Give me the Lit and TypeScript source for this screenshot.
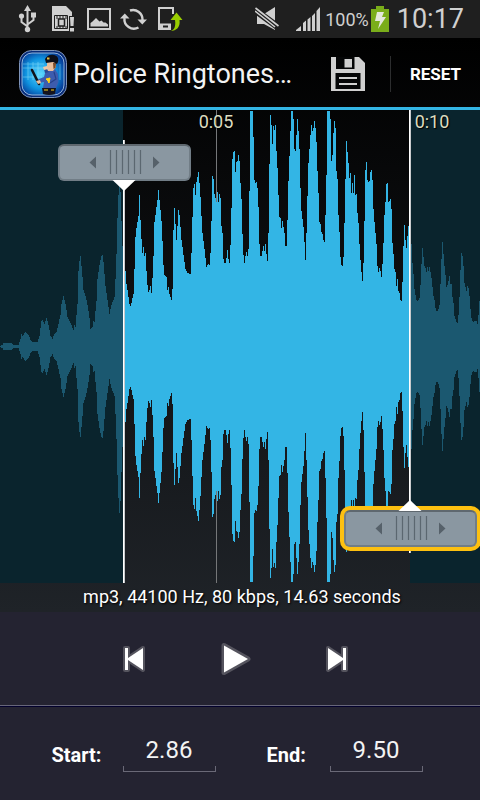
import { LitElement, html, css, svg } from "lit";
import { customElement, state } from "lit/decorators.js";

// Amplitude key points [column, half height] for the first half of the track.
const ATTACK: number[][] = [
  [0, 1], [2, 2], [3, 4], [11, 4], [13, 2], [18, 2], [20, 8], [21, 13], [22, 11], [25, 15], [28, 12], [30, 7], [32, 5], [37, 5],
  [39, 11], [41, 26], [42, 27], [44, 23], [46, 29], [48, 22], [50, 11], [52, 8], [54, 13], [56, 15], [58, 23], [60, 32], [61, 43],
  [63, 51], [65, 43], [67, 30], [70, 24], [73, 17], [74, 22], [75, 20], [77, 43], [78, 76], [79, 86], [80, 91], [82, 70], [83, 57],
  [85, 51], [87, 42], [89, 29], [90, 18], [92, 20], [93, 26], [94, 25], [96, 46], [97, 68], [99, 82], [101, 91], [102, 92], [103, 85],
  [105, 61], [107, 47], [109, 33], [111, 42], [114, 50], [115, 68], [116, 93], [117, 129], [118, 152], [119, 167], [120, 155],
  [121, 126], [122, 101], [123, 90], [124, 82], [125, 76], [126, 63], [127, 57], [129, 43], [130, 41], [131, 44], [133, 53],
  [134, 78], [135, 110], [136, 119], [138, 131], [139, 152], [140, 127], [141, 108], [142, 94], [143, 100], [144, 91], [145, 94],
  [146, 76], [147, 62], [148, 55], [149, 57], [150, 61], [151, 54], [152, 69], [153, 91], [154, 125], [155, 132], [157, 147],
  [158, 157], [159, 147], [161, 126], [162, 106], [163, 82], [164, 72], [166, 70], [167, 57], [168, 60], [169, 53], [171, 47],
  [172, 58], [173, 117], [174, 139], [175, 123], [176, 107], [177, 121], [178, 137], [179, 132], [181, 107], [183, 92], [185, 78],
  [187, 74], [190, 73], [191, 94], [192, 130], [193, 159], [194, 163], [195, 152], [196, 165], [198, 175], [199, 164], [200, 150],
  [201, 131], [202, 114], [204, 98], [206, 80], [207, 82], [208, 83], [209, 82], [210, 94], [211, 126], [212, 171], [213, 168],
  [214, 153], [215, 149], [216, 145], [217, 155], [218, 145], [219, 153], [220, 149], [221, 121], [222, 114], [223, 88], [224, 84],
  [225, 84], [226, 89], [227, 97], [228, 88], [229, 84], [230, 102], [231, 139], [232, 188], [233, 195], [234, 196], [235, 175],
  [236, 185], [237, 186], [238, 192], [239, 186],
];

// One half height per column for the rest of the visible track.
const BODY: number[] = [
  164, 148, 113, 92, 84, 91, 95, 91, 98, 156, 236, 236, 236, 210, 167, 164, 165, 159, 140, 103, 91, 91, 96, 101, 96, 103, 93, 86, 114,
  183, 232, 222, 203, 221, 217, 222, 196, 179, 152, 130, 129, 119, 126, 120, 114, 101, 101, 127, 166, 191, 216, 236, 236, 228, 198,
  196, 212, 228, 216, 198, 159, 136, 128, 120, 105, 87, 114, 151, 184, 198, 212, 222, 216, 219, 226, 219, 205, 176, 154, 125, 123,
  115, 113, 107, 105, 132, 172, 236, 236, 236, 228, 186, 192, 214, 226, 219, 176, 168, 132, 115, 90, 82, 81, 90, 124, 168, 206, 195,
  184, 169, 174, 154, 164, 154, 172, 152, 153, 134, 124, 103, 87, 75, 66, 84, 126, 177, 185, 167, 165, 166, 175, 177, 167, 138, 125,
  114, 103, 81, 75, 79, 76, 70, 83, 104, 132, 145, 163, 164, 145, 146, 148, 138, 104, 93, 78, 75, 61, 68, 56, 54, 47, 46, 65, 101,
  122, 107, 99, 111, 121, 118, 112, 103, 84, 73, 58, 52, 47, 46, 47, 49, 62, 83, 99, 90, 81, 79, 75, 80, 76, 80, 75, 69, 60, 51, 47,
  39, 36, 36, 38, 42, 63, 88, 105, 93, 81, 72, 60, 62, 66, 71, 63, 63, 50, 44, 31, 28, 25, 24, 32, 50, 77, 94, 91, 81, 64, 60, 56,
  61, 59, 51, 38, 29, 26, 25, 26, 26, 26, 23, 32, 46,
];

function buildColumns(): number[] {
  const out: number[] = [];
  for (let i = 0; i < ATTACK.length - 1; i++) {
    const [x0, h0] = ATTACK[i];
    const [x1, h1] = ATTACK[i + 1];
    for (let x = x0; x < x1; x++) out.push(Math.round(h0 + ((h1 - h0) * (x - x0)) / (x1 - x0)));
  }
  out.push(186);
  return out.concat(BODY).slice(0, 480);
}

const MID = 236;
const COLUMNS = buildColumns();

function wavePath(from: number, to: number): string {
  let top = `M${from} ${MID}`;
  let bottom = "";
  for (let x = from; x < to; x++) {
    const h = COLUMNS[x] ?? 46;
    top += `V${MID - h + 1}H${x + 1}`;
    bottom = `V${MID + h}H${x}` + bottom;
  }
  return top + bottom + "Z";
}

const grip = svg`
  <path d="M38 12.500v12l-6.500-6zM95 12.500v12l6.500-6z" fill="#56616a"/>
  <path d="M52.500 6v24M58.500 6v24M64.500 6v24M70.500 6v24M76.500 6v24M82.500 6v24" stroke="#5b6770" stroke-width="1.200"/>`;

@customElement("wave-editor")
class WaveEditor extends LitElement {
  static styles = css`
    :host { display: block; position: relative; overflow: hidden; min-height: 300px; }
    .wave { position: absolute; inset: 0; width: 100%; height: 100%; display: block; }
    .time { position: absolute; top: 1px; font-size: 18px; line-height: 21px; color: #dcdcc0; transform: translateX(-50%); text-shadow: 1px 1px 1px #000; }
    .t5 { left: 45%; }
    .t10 { left: 90%; }
    .line { position: absolute; width: 1px; background: #fff; border-right: 1px solid #c8cacc; }
    .line.start { left: 25.625%; top: 30px; bottom: 0; }
    .line.end { left: 85.209%; top: 0; bottom: 30px; }
    .handle {
      position: absolute; box-sizing: border-box; width: 133px; height: 37px; padding: 0; margin: 0;
      border: 2px solid #717d86; border-top-color: #5f686f; border-radius: 6px; background: #8a97a1; cursor: ew-resize;
    }
    .handle svg { position: absolute; left: -2px; top: -2px; width: 132px; height: 48px; overflow: visible; }
    .handle.start { left: calc(25.625% - 65px); top: 34px; }
    .handle.end { left: calc(85.209% - 65px); bottom: 36px; box-shadow: 0 0 0 4px #fdc010; }
  `;
  render() {
    return html`
      <svg class="wave" viewBox="0 0 480 473" preserveAspectRatio="none" shape-rendering="crispEdges" aria-label="Waveform">
        <path d="M0 0H123V473H0zM410 0H480V473H410z" fill="#0a242d"/>
        <path d="M216 0h1v473h-1z" fill="#757779"/>
        <path d=${wavePath(0, 123)} fill="#1b5870"/>
        <path d=${wavePath(123, 410)} fill="#33b5e5"/>
        <path d=${wavePath(410, 480)} fill="#1b5870"/>
      </svg>
      <span class="time t5">0:05</span>
      <span class="time t10">0:10</span>
      <div class="line start"></div>
      <div class="line end"></div>
      <button class="handle start" aria-label="Start marker">
        <svg viewBox="0 0 132 48">${grip}<path d="M54.500 36h23l-11.500 11z" fill="#fff"/></svg>
      </button>
      <button class="handle end" aria-label="End marker">
        <svg viewBox="0 0 132 48">${grip}<path d="M54.500 1h23l-11.500-11z" fill="#fff"/></svg>
      </button>`;
  }
}

@customElement("status-bar")
class StatusBar extends LitElement {
  static styles = css`
    :host { display: flex; align-items: center; height: 38px; box-sizing: border-box; padding: 0 16px; background: #1f1f1f; color: #d0d0d0; }
    svg { display: block; flex: none; }
    .left { display: flex; gap: 8px; flex: 1; }
    .right { display: flex; align-items: center; }
    .pct { font-size: 18px; line-height: 22px; margin: 2px 2px 0 5px; }
    .clock { font-size: 27px; line-height: 34px; margin-left: 8px; font-weight: 400; }
    .signal { margin-left: 17px; }
  `;
  render() {
    return html`
      <div class="left">
        <svg width="24" height="28" viewBox="0 0 24 28" fill="none" stroke="#d0d0d0" stroke-width="2">
          <path d="M11.500 25V5M11.500 21.500L5.500 17V12M11.500 19.500L17.500 15V10"/>
          <path d="M11.500 0l3.500 6h-7z" fill="#d0d0d0" stroke="none"/>
          <circle cx="5.500" cy="11" r="2.600" fill="#d0d0d0" stroke="none"/>
          <path d="M15 7.500h5v5h-5z" fill="#d0d0d0" stroke="none"/>
          <circle cx="11.500" cy="24.500" r="2.700" fill="#d0d0d0" stroke="none"/>
        </svg>
        <svg width="28" height="28" viewBox="0 0 28 28">
          <path d="M4 1h14l6 6v19H4z" fill="#d0d0d0"/>
          <path d="M6.500 10.500h13v13h-13z" fill="none" stroke="#1f1f1f"/>
          <path d="M10.500 14h6v7h-6z" fill="none" stroke="#1f1f1f" stroke-width="1.500"/>
          <path d="M9 11v3M12 11v3M15 11v3M18 11v3M9 21v3M12 21v3M15 21v3M18 21v3" stroke="#1f1f1f"/>
          <path d="M21 11h6v16h-6z" fill="#1f1f1f"/>
          <path d="M22 12h4l-.5 9h-3zM22 23h4v3.500h-4z" fill="#d0d0d0"/>
        </svg>
        <svg width="28" height="28" viewBox="0 0 28 28">
          <path d="M4 4h22v20H4z" fill="none" stroke="#d0d0d0" stroke-width="2"/>
          <path d="M6.500 21.500V18l2-1.500 3.500-3.500 3.500 3.500 2-1 2 2h2l2.500 2v2z" fill="#d0d0d0"/>
        </svg>
        <svg width="28" height="28" viewBox="0 0 28 28" fill="none" stroke="#d0d0d0" stroke-width="2.400">
          <path d="M10 5.500A9.500 9.500 0 0 1 22.500 15M18.500 22.500A9.500 9.500 0 0 1 4.500 13"/>
          <path d="M17.500 14.500h9.500l-4.700 5zM0 13.500h9.500l-4.700-5z" fill="#d0d0d0" stroke="none"/>
        </svg>
        <svg width="28" height="28" viewBox="0 0 28 28">
          <path d="M2 2h16v7h-2V4H4v15h10v5H2z" fill="#d0d0d0"/>
          <path d="M2 18.500h13V25H2z" fill="#d0d0d0"/>
          <path d="M7 20.500h5v2H7z" fill="#1f1f1f"/>
          <path d="M14.500 26c4-1 5.500-5 4.500-11h-4.500l6-7.500 6 7.500h-3c1 7-3 11-9 11z" fill="#99cc00"/>
        </svg>
      </div>
      <div class="right">
        <svg width="24" height="24" viewBox="0 0 24 24">
          <path d="M2 7h7l11-7v23L9 17H2z" fill="#d0d0d0"/>
          <path d="M0 3l23 17" stroke="#1f1f1f" stroke-width="7"/>
          <path d="M.500 1l23 18M0 4l20 16" stroke="#d0d0d0" stroke-width="1.600"/>
        </svg>
        <svg class="signal" width="24" height="24" viewBox="0 0 24 24" fill="#d0d0d0">
          <path d="M0 24v-1l5-4v5zM7 24v-8l3-2.500v10.500zM11.500 24V12.500l3-2.500v14zM16 24V9l3-3v18zM20.500 24V4l3.500-4v24z"/>
        </svg>
        <span class="pct">100%</span>
        <svg width="18" height="26" viewBox="0 0 18 26">
          <path d="M5 0h8v3h5v23H0V3h5z" fill="#7aad1a"/>
          <path d="M6 6h7l-2 5h4l-8 12 2-8H4z" fill="#e4e8dc"/>
        </svg>
        <span class="clock">10:17</span>
      </div>`;
  }
}

@customElement("app-root")
class AppRoot extends LitElement {
  @state() private start = "2.86";
  @state() private end = "9.50";

  static styles = css`
    :host {
      display: flex; flex-direction: column; min-height: 100vh; color: #fff;
      font-family: Roboto, "Noto Sans", sans-serif; background: #242331;
    }
    .stage { flex: 1; display: flex; flex-direction: column; background: linear-gradient(#000, #1f2328); }
    header { display: flex; align-items: center; height: 72px; box-sizing: border-box; border-bottom: 3px solid #33b5e5; padding: 2px 0 0 19px; }
    .logo { flex: none; display: block; }
    h1 { flex: 1; margin: 0 0 0 6px; font-size: 27px; line-height: 32px; font-weight: 400; white-space: nowrap; color: #f3f3f3; }
    header button, .transport button { background: none; border: 0; padding: 0; margin: 0; color: inherit; font-family: inherit; cursor: pointer; }
    .save { width: 84px; height: 48px; display: flex; align-items: center; justify-content: center; }
    header .reset { height: 36px; width: 90px; border-left: 1px solid #2c2d2e; font-size: 17px; line-height: 22px; font-weight: 700; }
    wave-editor { flex: 1; }
    .info { height: 29px; margin: 0; text-align: center; font-size: 18px; line-height: 28px; padding-left: 4px; text-shadow: 1px 1px 2px #000; }
    .transport { height: 93px; display: flex; justify-content: center; align-items: center; padding-right: 9px; }
    .transport button { width: 101px; height: 64px; display: flex; align-items: center; justify-content: center; }
    .times { height: 94px; border-top: 1px solid #67667a; box-shadow: inset 0 1px #02002c; display: flex; justify-content: center; align-items: center; padding-right: 6px; }
    label { font-size: 20px; line-height: 24px; font-weight: 700; margin-right: 21px; padding-top: 4px; min-width: 42px; }
    .field { display: flex; width: 93px; height: 38px; position: relative; }
    .field + label { margin-left: 51px; }
    .field::after { content: ""; position: absolute; left: 0; right: 0; bottom: 0; height: 5px; border: 1px solid #6a6977; border-top: 0; pointer-events: none; }
    input { width: 100%; min-width: 0; height: 32px; border: 0; padding: 0; background: none; outline: 0; color: #f3f3f3; font: 400 24px/32px Roboto, sans-serif; text-align: center; }
  `;

  render() {
    return html`
      <status-bar></status-bar>
      <div class="stage">
        <header>
          <svg class="logo" width="48" height="48" viewBox="0 0 48 48">
            <defs>
              <radialGradient id="glow" cx=".45" cy=".5" r=".6"><stop offset="0" stop-color="#5fd8ff"/><stop offset=".6" stop-color="#0f94e0"/><stop offset="1" stop-color="#063c98"/></radialGradient>
            </defs>
            <rect x=".5" y=".5" width="47" height="47" rx="12" fill="#082c78" stroke="#7e93b8"/>
            <rect x="3" y="3" width="42" height="42" rx="10" fill="url(#glow)" stroke="#b8d4f0" stroke-width=".8"/>
            <path d="M4 14h21M4 18h21M4 27h19M9 12v18M14 12v18M19 12v18M41 14v16" stroke="#a8f0ff" stroke-width=".8" opacity=".5"/>
            <path d="M27 20l4-1h5l3 5 .5 8-2.500 6H24l1-6-5 1-2-3 7-3z" fill="#3d5cae"/>
            <path d="M30 22l-4 1-1-4 2-1z" fill="#2e4a94"/>
            <path d="M35 22l2 7-6 4" fill="none" stroke="#26408a" stroke-width="1.200"/>
            <path d="M23 38h14l-1 6q-6 2-12 0z" fill="#14141f"/>
            <path d="M28 12h8l1 5-3 4h-5l-1-3z" fill="#eabf9c"/>
            <path d="M24 17l4-1 1 3-4 1z" fill="#f0c8a8"/>
            <path d="M34 13h3l-.5 5-2 1z" fill="#7a4a28"/>
            <path d="M26 9c2-4 6-5 9-4 4 1 5 4 4 7l-1 2-4-2-7 1z" fill="#0d0f18"/>
            <path d="M28 7.500h2.500v2H28z" fill="#e0bb40"/>
            <path d="M13 20l7 14" stroke="#10131c" stroke-width="2.600" stroke-linecap="round"/>
            <path d="M17 31l4-1 1 3-3 1z" fill="#eabf9c"/>
            <path d="M27 29l4-1-1 5-1-2zM25 40h4M32 40h3" fill="#ffd21a" stroke="#ffd21a"/>
          </svg>
          <h1>Police Ringtones…</h1>
          <button class="save" aria-label="Save">
            <svg width="34" height="34" viewBox="0 0 34 34">
              <path d="M0 0h28l6 6v28H0z" fill="#d0d0d0"/>
              <path d="M5 0h18.500v12H5z" fill="#050607"/>
              <path d="M13.500 2H21v8.500h-7.500z" fill="#d0d0d0"/>
              <path d="M4.500 16h25v16h-25z" fill="#050607"/>
              <path d="M8 20h18v2H8zM8 26h18v2H8z" fill="#d0d0d0"/>
            </svg>
          </button>
          <button class="reset">RESET</button>
        </header>
        <wave-editor></wave-editor>
        <p class="info">mp3, 44100 Hz, 80 kbps, 14.63 seconds</p>
      </div>
      <div class="transport">
        <button aria-label="Rewind">
          <svg width="28" height="32" viewBox="0 0 28 32"><path d="M4 5v22h3v-10l15 10V5L7 15V5z" fill="#fff" stroke="#55545e" stroke-width="4" stroke-linejoin="round" paint-order="stroke"/></svg>
        </button>
        <button aria-label="Play">
          <svg width="30" height="36" viewBox="0 0 30 36"><path d="M3 4.500v27L27 18z" fill="#fff" stroke="#55545e" stroke-width="5" stroke-linejoin="round" paint-order="stroke"/></svg>
        </button>
        <button aria-label="Forward">
          <svg width="28" height="32" viewBox="0 0 28 32"><path d="M23 5v22h-3v-10L5 27V5l15 10V5z" fill="#fff" stroke="#55545e" stroke-width="4" stroke-linejoin="round" paint-order="stroke"/></svg>
        </button>
      </div>
      <div class="times">
        <label for="start">Start:</label>
        <div class="field"><input id="start" type="text" inputmode="decimal" .value=${this.start} @input=${(e: Event) => (this.start = (e.target as HTMLInputElement).value)} /></div>
        <label for="end">End:</label>
        <div class="field"><input id="end" type="text" inputmode="decimal" .value=${this.end} @input=${(e: Event) => (this.end = (e.target as HTMLInputElement).value)} /></div>
      </div>`;
  }
}
